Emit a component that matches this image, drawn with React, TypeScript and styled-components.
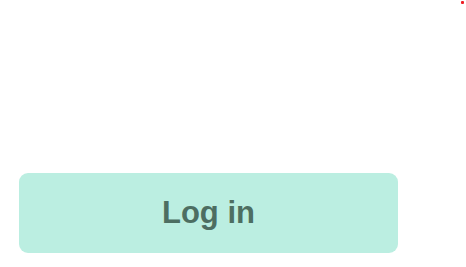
import React from "react";
import styled, { createGlobalStyle } from "styled-components";

const Global = createGlobalStyle`
  html, body { margin: 0; padding: 0; background: #ffffff; }
  body { font-family: "Liberation Sans", Arial, sans-serif; }
`;

const Page = styled.div`
  position: relative;
  width: 466px;
  height: 267px;
  box-sizing: border-box;
  padding: 173px 0 0 19px;
`;

const Dot = styled.span`
  position: absolute;
  top: 1px;
  left: 461px;
  width: 3px;
  height: 3px;
  border-radius: 1px;
  background: #ee1c24;
`;

const LoginButton = styled.button`
  display: flex;
  align-items: center;
  justify-content: center;
  width: 379px;
  height: 80px;
  border: none;
  border-radius: 9px;
  background: #bbeee1;
  color: #4d6e62;
  font-family: "Liberation Sans", Arial, sans-serif;
  font-weight: 700;
  font-size: 31px;
  padding: 0;
  cursor: pointer;
`;

export default function App() {
  return (
    <>
      <Global />
      <Page>
        <Dot />
        <LoginButton>Log in</LoginButton>
      </Page>
    </>
  );
}
